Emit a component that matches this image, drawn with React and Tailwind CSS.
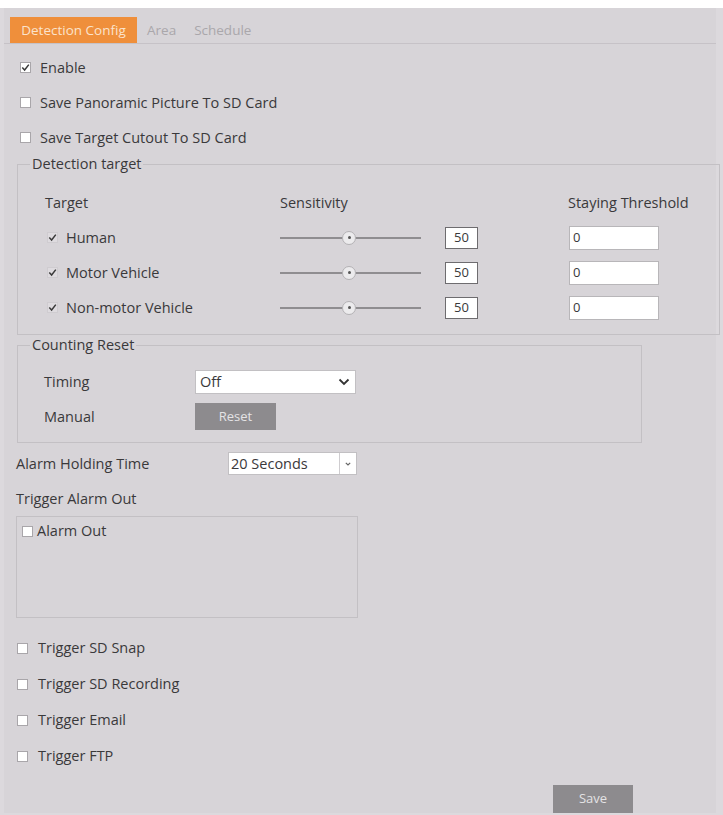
import React from "react";

const font = { fontFamily: '"Open Sans", "Noto Sans", sans-serif' };

function Box({ checked, faint }) {
  return (
    <span
      className={
        "inline-flex items-center justify-center w-[11px] h-[11px] shrink-0 border " +
        (faint ? "border-[#cfccd0] bg-[#dedbdf]" : "border-[#a9a6aa] bg-white")
      }
    >
      {checked && (
        <svg width="9" height="9" viewBox="0 0 9 9">
          <path d="M1.3 4.6 L3.6 7 L7.8 1.6" fill="none" stroke="#3a3a3a" strokeWidth="1.5" />
        </svg>
      )}
    </span>
  );
}

function Slider() {
  return (
    <div className="relative w-[141px] h-[14px] flex items-center">
      <div className="w-full h-[2px] bg-[#8f8d90]" />
      <div className="absolute left-[62px] top-0 w-[14px] h-[14px] rounded-full bg-[#ecebed] border border-[#b3b1b4] flex items-center justify-center">
        <div className="w-[3px] h-[3px] rounded-full bg-[#555]" />
      </div>
    </div>
  );
}

function TargetRow({ label }) {
  return (
    <div className="flex items-center h-[35px]">
      <div className="w-[262px] pl-[29px] flex items-center gap-[8px]">
        <Box checked faint />
        <span>{label}</span>
      </div>
      <Slider />
      <div className="ml-[24px] w-[33px] h-[22px] bg-white border border-[#6e6c6f] flex items-center justify-center text-[13px]">
        50
      </div>
      <div className="ml-[91px] w-[90px] h-[24px] bg-white border border-[#b8b6b9] flex items-center pl-[3px] text-[13px]">
        0
      </div>
    </div>
  );
}

function CheckRow({ label, checked }) {
  return (
    <div className="flex items-center h-[35px] pl-[16px] gap-[9px]">
      <Box checked={checked} />
      <span>{label}</span>
    </div>
  );
}

function TriggerRow({ label }) {
  return (
    <div className="flex items-center h-[36px] pl-[13px] gap-[10px]">
      <Box />
      <span>{label}</span>
    </div>
  );
}

export default function App() {
  return (
    <div className="w-[723px] h-[815px] bg-white pt-[8px] overflow-hidden text-[14.5px] text-[#3a393b]" style={font}>
      <div className="w-[723px] h-[807px] bg-[#dcd9dd] pl-[4px]">
        <div className="w-[712px] h-[805px] bg-[#d7d4d8] flex flex-col">
          {/* tabs */}
          <div className="h-[37px] border-b border-[#c6c2c7] flex items-end pl-[6px] text-[13.5px]">
            <div className="w-[127px] h-[26px] bg-[#ef8f3b] text-[#fbe3cc] flex items-center justify-center">
              Detection Config
            </div>
            <div className="h-[26px] flex items-center ml-[10px] text-[#aaa7ab]">Area</div>
            <div className="h-[26px] flex items-center ml-[18px] text-[#aaa7ab]">Schedule</div>
          </div>

          <div className="flex flex-col pt-[6px]">
            <CheckRow label="Enable" checked />
            <CheckRow label="Save Panoramic Picture To SD Card" />
            <CheckRow label="Save Target Cutout To SD Card" />

            {/* Detection target */}
            <fieldset className="ml-[13px] w-[703px] border border-[#c3c0c4] p-0 pb-[9px]">
              <legend className="ml-[12px] px-[2px] leading-[18px]">Detection target</legend>
              <div className="flex items-center h-[35px] mt-[12px]">
                <div className="w-[262px] pl-[27px]">Target</div>
                <div className="w-[288px]">Sensitivity</div>
                <div>Staying Threshold</div>
              </div>
              <TargetRow label="Human" />
              <TargetRow label="Motor Vehicle" />
              <TargetRow label="Non-motor Vehicle" />
            </fieldset>

            {/* Counting Reset */}
            <fieldset className="ml-[13px] mt-[1px] w-[625px] border border-[#c3c0c4] p-0 pb-[12px]">
              <legend className="ml-[12px] px-[2px] leading-[18px]">Counting Reset</legend>
              <div className="flex items-center mt-[16px]">
                <div className="w-[177px] pl-[26px]">Timing</div>
                <div className="w-[161px] h-[24px] bg-white border border-[#c2c0c3] flex items-center justify-between pl-[4px] pr-[5px]">
                  <span>Off</span>
                  <svg width="12" height="8" viewBox="0 0 12 8">
                    <path d="M1.5 1.5 L6 6 L10.5 1.5" fill="none" stroke="#333" strokeWidth="1.8" />
                  </svg>
                </div>
              </div>
              <div className="flex items-center mt-[9px]">
                <div className="w-[177px] pl-[26px]">Manual</div>
                <div className="w-[81px] h-[27px] bg-[#8d8b8e] text-[#e4e3e5] flex items-center justify-center text-[13px]">
                  Reset
                </div>
              </div>
            </fieldset>

            {/* Alarm holding time */}
            <div className="flex items-center mt-[9px] pl-[12px]">
              <div className="w-[212px]">Alarm Holding Time</div>
              <div className="w-[129px] h-[23px] bg-white border border-[#c2c0c3] flex items-center">
                <span className="flex-1 pl-[2px]">20 Seconds</span>
                <div className="w-[17px] h-full border-l border-[#cfcdd0] flex items-center justify-center">
                  <svg width="6" height="4" viewBox="0 0 6 4">
                    <path d="M0.8 0.8 L3 3 L5.2 0.8" fill="none" stroke="#666" strokeWidth="1.2" />
                  </svg>
                </div>
              </div>
            </div>

            <div className="mt-[15px] pl-[12px] leading-[18px]">Trigger Alarm Out</div>

            <div className="ml-[12px] mt-[8px] w-[342px] h-[102px] border border-[#c3c0c4] pt-[5px] pl-[5px]">
              <div className="flex items-center gap-[4px] leading-[18px]">
                <Box />
                <span>Alarm Out</span>
              </div>
            </div>

            <div className="mt-[12px] flex flex-col">
              <TriggerRow label="Trigger SD Snap" />
              <TriggerRow label="Trigger SD Recording" />
              <TriggerRow label="Trigger Email" />
              <TriggerRow label="Trigger FTP" />
            </div>

            <div className="mt-[11px] ml-[549px] w-[80px] h-[28px] bg-[#8d8b8e] text-[#e4e3e5] flex items-center justify-center text-[13px]">
              Save
            </div>
          </div>
        </div>
      </div>
    </div>
  );
}
